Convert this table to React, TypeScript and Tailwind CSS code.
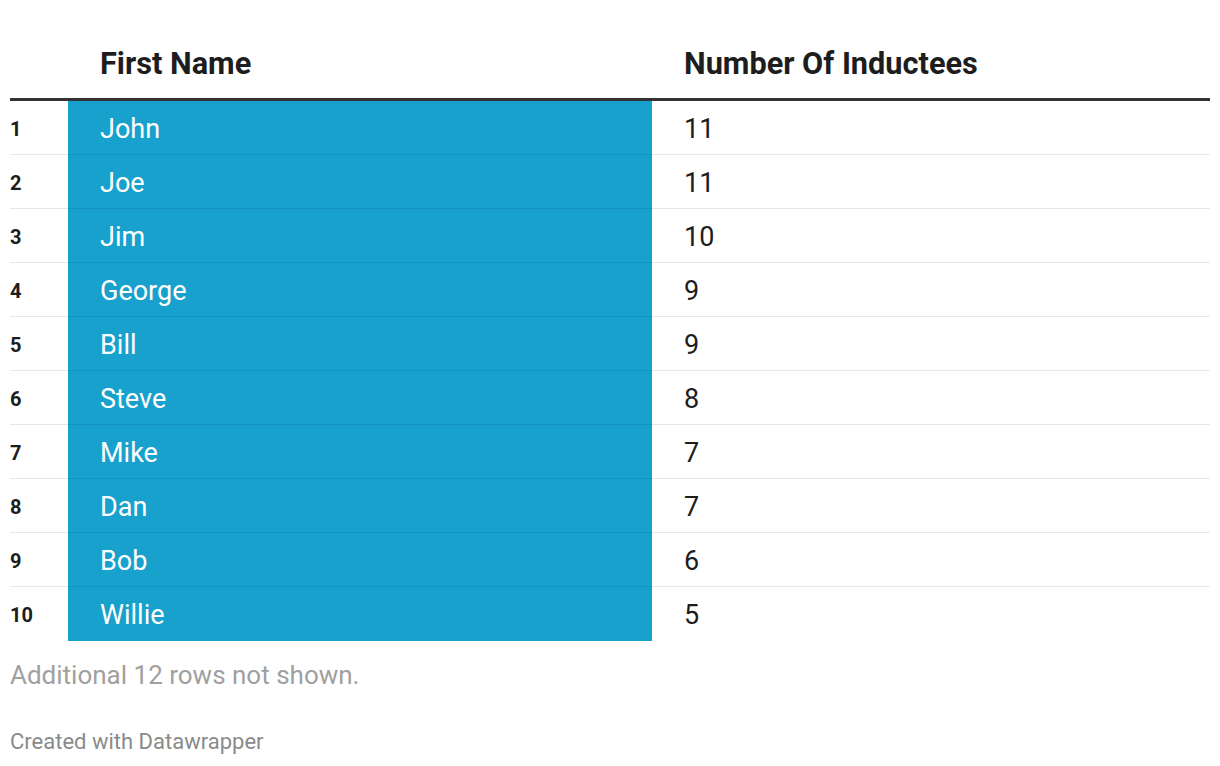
const rows: Array<{ name: string; count: number }> = [
  { name: "John", count: 11 },
  { name: "Joe", count: 11 },
  { name: "Jim", count: 10 },
  { name: "George", count: 9 },
  { name: "Bill", count: 9 },
  { name: "Steve", count: 8 },
  { name: "Mike", count: 7 },
  { name: "Dan", count: 7 },
  { name: "Bob", count: 6 },
  { name: "Willie", count: 5 },
];

export default function App() {
  return (
    <div className="w-[1220px] h-[766px] bg-white px-[10px] font-['Roboto',sans-serif] text-[#1d1d1d]">
      {/* header */}
      <div className="flex h-[101px] items-end border-b-[3px] border-[#333333] pb-[17px]">
        <div className="w-[58px]" />
        <div className="w-[584px] pl-[32px] text-[30.7px] font-bold leading-[34px]">First Name</div>
        <div className="pl-[32px] text-[30.7px] font-bold leading-[34px]">Number Of Inductees</div>
      </div>

      {/* rows */}
      <div>
        {rows.map((row, i) => (
          <div key={row.name} className="flex h-[54px]">
            <div
              className={`flex w-[58px] items-center pt-[2px] text-[20px] font-bold ${
                i < rows.length - 1 ? "border-b border-[#e6e6e6]" : ""
              }`}
            >
              {i + 1}
            </div>
            <div
              className={`flex w-[584px] items-center bg-[#18a1cd] pl-[32px] pt-[3px] text-[27px] text-white ${
                i < rows.length - 1 ? "border-b border-[#1693bc]" : ""
              }`}
            >
              {row.name}
            </div>
            <div
              className={`flex flex-1 items-center pl-[32px] pt-[3px] text-[27px] ${
                i < rows.length - 1 ? "border-b border-[#e6e6e6]" : ""
              }`}
            >
              {row.count}
            </div>
          </div>
        ))}
      </div>

      <div className="mt-[19px] text-[26px] leading-[30px] text-[#a0a0a0]">Additional 12 rows not shown.</div>
      <div className="mt-[39px] text-[22px] leading-[26px] text-[#8a8a8a]">Created with Datawrapper</div>
    </div>
  );
}
